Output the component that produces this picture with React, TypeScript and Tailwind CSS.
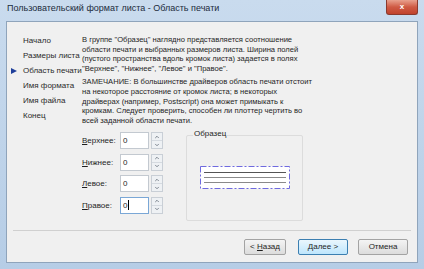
import { ChevronUp, ChevronDown } from 'lucide-react';

const NAV = ['Начало', 'Размеры листа', 'Область печати', 'Имя формата', 'Имя файла', 'Конец'];

const INTRO = [
  'В группе "Образец" наглядно представляется соотношение',
  'области печати и выбранных размеров листа. Ширина полей',
  '(пустого пространства вдоль кромок листа) задается в полях',
  '"Верхнее", "Нижнее", "Левое" и "Правое".',
];

const NOTE = [
  'ЗАМЕЧАНИЕ: В большинстве драйверов область печати отстоит',
  'на некоторое расстояние от кромок листа; в некоторых',
  'драйверах (например, Postscript) она может примыкать к',
  'кромкам. Следует проверить, способен ли плоттер чертить во',
  'всей заданной области печати.',
];

const FIELDS = [
  { label: 'Верхнее:', key: 'В', rest: 'ерхнее:' },
  { label: 'Нижнее:', key: 'Н', rest: 'ижнее:' },
  { label: 'Левое:', key: 'Л', rest: 'евое:' },
  { label: 'Правое:', key: 'П', rest: 'равое:' },
];

function Spinner() {
  return (
    <div className="flex h-[17px] w-[12px] flex-col border border-[#c9cfd6] bg-[#eef1f4]">
      <div className="flex flex-1 items-center justify-center border-b border-[#d5dae0]">
        <ChevronUp size={6} strokeWidth={3} className="text-[#5a6470]" />
      </div>
      <div className="flex flex-1 items-center justify-center">
        <ChevronDown size={6} strokeWidth={3} className="text-[#5a6470]" />
      </div>
    </div>
  );
}

// Sheet preview: white page with dash-dot print-area border and three lines
function SheetPreview() {
  return (
    <svg width="90" height="23" viewBox="0 0 90 23" className="block">
      <rect x="0.5" y="0.5" width="89" height="22" fill="#ffffff" stroke="#6f6adf" strokeWidth="1" strokeDasharray="6 2 2 2" />
      <line x1="4" y1="6.5" x2="86" y2="6.5" stroke="#555555" strokeWidth="1" />
      <line x1="4" y1="11.5" x2="86" y2="11.5" stroke="#8a8a8a" strokeWidth="1" />
      <line x1="4" y1="16.5" x2="86" y2="16.5" stroke="#8a8a8a" strokeWidth="1" />
    </svg>
  );
}

export default function App() {
  return (
    <div
      className="flex h-[269px] w-[424px] flex-col bg-gradient-to-b from-[#c9dbee] to-[#b6cde6] px-[6px] pb-[6px] text-[#1e1e1e]"
      style={{ fontFamily: '"Liberation Sans", Arial, sans-serif' }}
    >
      {/* Title bar */}
      <div className="flex h-[21px] shrink-0 items-start justify-between">
        <span className="pl-[1px] pt-[4px] text-[9px] leading-none text-[#1b2b3c]">
          Пользовательский формат листа - Область печати
        </span>
        <div className="flex h-[15px] w-[32px] items-center justify-center rounded-b-[3px] border border-t-0 border-[#8a3a2e] bg-gradient-to-b from-[#e8a08e] via-[#cf5a44] to-[#c0422c]">
          <span className="text-[8px] font-bold leading-none text-white">x</span>
        </div>
      </div>

      {/* Client area */}
      <div className="flex flex-1 flex-col border border-[#8fa4bb] bg-[#f0f0f0]">
        <div className="flex flex-1">
          {/* Navigation */}
          <div className="flex w-[75px] shrink-0 flex-col gap-[6.6px] pt-[15px] text-[8px] leading-[8.5px] text-[#2a2a2a]">
            {NAV.map((n, i) => (
              <div key={n} className="relative whitespace-nowrap pl-[16px]">
                {i === 2 && (
                  <span className="absolute left-[4px] top-[1px] h-0 w-0 border-y-[3.5px] border-l-[6px] border-y-transparent border-l-[#1f3f9a]" />
                )}
                {n}
              </div>
            ))}
          </div>

          {/* Content */}
          <div className="flex flex-1 flex-col pt-[13px] text-[7.6px] leading-[9.6px]">
            <div className="whitespace-nowrap">
              {INTRO.map((l) => (
                <div key={l}>{l}</div>
              ))}
            </div>
            <div className="mt-[4px] whitespace-nowrap">
              {NOTE.map((l) => (
                <div key={l}>{l}</div>
              ))}
            </div>

            <div className="mt-[5px] flex">
              <div className="flex w-[104px] flex-col gap-[4.5px] pt-[2px]">
                {FIELDS.map((f, i) => (
                  <div key={f.label} className="flex h-[17px] items-center">
                    <span className="w-[38px] text-[8px]">
                      <span className="underline">{f.key}</span>
                      {f.rest}
                    </span>
                    <div
                      className={`flex h-[17px] w-[29px] items-center border bg-white pl-[2px] text-[8px] ${
                        i === 3 ? 'border-[#7aa7d6]' : 'border-[#c3c9d0]'
                      }`}
                    >
                      0{i === 3 && <span className="ml-[0.5px] h-[10px] w-px bg-black" />}
                    </div>
                    <div className="ml-[2px]">
                      <Spinner />
                    </div>
                  </div>
                ))}
              </div>

              {/* Sample group */}
              <div className="relative mt-[5px] h-[86px] w-[117px] rounded-[2px] border border-[#dcdcdc]">
                <span className="absolute -top-[6px] left-[6px] bg-[#f0f0f0] px-[1px] text-[8px] leading-none">
                  Образец
                </span>
                <div className="ml-[13px] mt-[30px]">
                  <SheetPreview />
                </div>
              </div>
            </div>
          </div>
        </div>

        {/* Separator + buttons */}
        <div className="mx-[6px] border-t border-[#d0d0d0]" />
        <div className="flex h-[31px] items-center justify-end gap-[10px] pr-[9px] text-[8px]">
          <button className="flex h-[16px] w-[42px] items-center justify-center rounded-[2px] border border-[#a3a3a3] bg-gradient-to-b from-[#f4f4f4] to-[#dcdcdc]">
            &lt;&nbsp;<span className="underline">Н</span>азад
          </button>
          <button className="ml-[2px] flex h-[16px] w-[50px] items-center justify-center rounded-[2px] border border-[#3c7fb1] bg-gradient-to-b from-[#eaf6fd] to-[#bee6fd]">
            <span className="underline">Д</span>алее &gt;
          </button>
          <button className="flex h-[16px] w-[50px] items-center justify-center rounded-[2px] border border-[#a3a3a3] bg-gradient-to-b from-[#f4f4f4] to-[#dcdcdc]">
            Отмена
          </button>
        </div>
      </div>
    </div>
  );
}
